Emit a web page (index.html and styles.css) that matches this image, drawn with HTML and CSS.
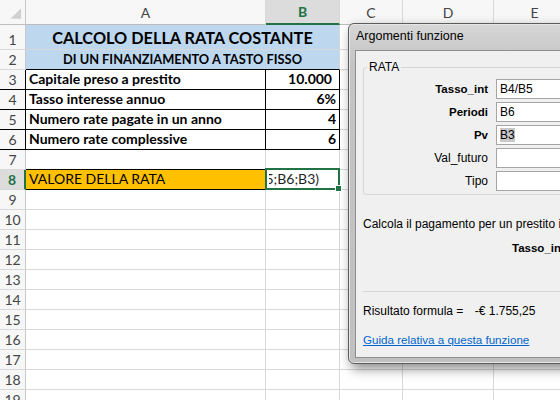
FILE: index.html
```html
<!DOCTYPE html>
<html lang="it">
<head>
  <meta charset="UTF-8" />
  <title>Calcolo della rata costante</title>
  <link rel="stylesheet" href="styles.css">
</head>
<body>

  <!-- Foglio -->
  <div class="sheet">
    <div class="row head">
      <div class="rh corner">
        <svg width="26" height="25" viewBox="0 0 26 25"><polygon points="22,9 22,20 11,20" fill="#d0d0d0"/></svg>
      </div>
      <div class="ch a">A</div>
      <div class="ch b active">B</div>
      <div class="ch c">C</div>
      <div class="ch d">D</div>
      <div class="ch e">E</div>
    </div>

    <div class="row tall">
      <div class="rh">1</div>
      <div class="cell ab band title">CALCOLO DELLA RATA COSTANTE</div>
      <div class="cell c"></div><div class="cell d"></div><div class="cell e"></div>
    </div>
    <div class="row">
      <div class="rh">2</div>
      <div class="cell ab band subtitle">DI UN FINANZIAMENTO A TASTO FISSO</div>
      <div class="cell c"></div><div class="cell d"></div><div class="cell e"></div>
    </div>
    <div class="row">
      <div class="rh boxed">3</div>
      <div class="cell a boxed label">Capitale preso a prestito</div>
      <div class="cell b boxed value pad">10.000</div>
      <div class="cell c"></div><div class="cell d"></div><div class="cell e"></div>
    </div>
    <div class="row">
      <div class="rh boxed">4</div>
      <div class="cell a boxed label">Tasso interesse annuo</div>
      <div class="cell b boxed value">6%</div>
      <div class="cell c"></div><div class="cell d"></div><div class="cell e"></div>
    </div>
    <div class="row">
      <div class="rh boxed">5</div>
      <div class="cell a boxed label">Numero rate pagate in un anno</div>
      <div class="cell b boxed value">4</div>
      <div class="cell c"></div><div class="cell d"></div><div class="cell e"></div>
    </div>
    <div class="row">
      <div class="rh boxed">6</div>
      <div class="cell a boxed label">Numero rate complessive</div>
      <div class="cell b boxed value">6</div>
      <div class="cell c"></div><div class="cell d"></div><div class="cell e"></div>
    </div>
    <div class="row">
      <div class="rh">7</div>
      <div class="cell a top-of-total"></div>
      <div class="cell b"></div>
      <div class="cell c"></div><div class="cell d"></div><div class="cell e"></div>
    </div>
    <div class="row">
      <div class="rh active">8</div>
      <div class="cell a total">VALORE DELLA RATA</div>
      <div class="cell b sel"><div class="edit"><span>=RATA(B4/B5;B6;B3)</span></div></div>
      <div class="cell c"></div><div class="cell d"></div><div class="cell e"></div>
    </div>
    <div class="row"><div class="rh">9</div><div class="cell a"></div><div class="cell b"></div><div class="cell c"></div><div class="cell d"></div><div class="cell e"></div></div>
    <div class="row"><div class="rh">10</div><div class="cell a"></div><div class="cell b"></div><div class="cell c"></div><div class="cell d"></div><div class="cell e"></div></div>
    <div class="row"><div class="rh">11</div><div class="cell a"></div><div class="cell b"></div><div class="cell c"></div><div class="cell d"></div><div class="cell e"></div></div>
    <div class="row"><div class="rh">12</div><div class="cell a"></div><div class="cell b"></div><div class="cell c"></div><div class="cell d"></div><div class="cell e"></div></div>
    <div class="row"><div class="rh">13</div><div class="cell a"></div><div class="cell b"></div><div class="cell c"></div><div class="cell d"></div><div class="cell e"></div></div>
    <div class="row"><div class="rh">14</div><div class="cell a"></div><div class="cell b"></div><div class="cell c"></div><div class="cell d"></div><div class="cell e"></div></div>
    <div class="row"><div class="rh">15</div><div class="cell a"></div><div class="cell b"></div><div class="cell c"></div><div class="cell d"></div><div class="cell e"></div></div>
    <div class="row"><div class="rh">16</div><div class="cell a"></div><div class="cell b"></div><div class="cell c"></div><div class="cell d"></div><div class="cell e"></div></div>
    <div class="row"><div class="rh">17</div><div class="cell a"></div><div class="cell b"></div><div class="cell c"></div><div class="cell d"></div><div class="cell e"></div></div>
    <div class="row"><div class="rh">18</div><div class="cell a"></div><div class="cell b"></div><div class="cell c"></div><div class="cell d"></div><div class="cell e"></div></div>
    <div class="row"><div class="rh">19</div><div class="cell a"></div><div class="cell b"></div><div class="cell c"></div><div class="cell d"></div><div class="cell e"></div></div>
  </div>

  <!-- Finestra Argomenti funzione -->
  <div class="dialog">
    <div class="dlg-title">Argomenti funzione</div>
    <div class="dlg-body">
      <fieldset class="group">
        <legend>RATA</legend>
        <div class="args">
          <label class="req">Tasso_int</label><div class="field">B4/B5</div>
          <label class="req">Periodi</label><div class="field">B6</div>
          <label class="req">Pv</label><div class="field"><span class="hl">B3</span></div>
          <label>Val_futuro</label><div class="field"></div>
          <label>Tipo</label><div class="field"></div>
        </div>
      </fieldset>

      <p class="desc">Calcola il pagamento per un prestito in base a pagamenti costanti e a un tasso di interesse costante.</p>
      <p class="arg-help"><b>Tasso_int</b>&nbsp;&nbsp;è il tasso di interesse per periodo del prestito.</p>

      <hr>

      <p class="result">Risultato formula = <span class="res-val">-€ 1.755,25</span></p>
      <a href="#" class="help">Guida relativa a questa funzione</a>
    </div>
  </div>

</body>
</html>
```

FILE: styles.css
```css
body {
  margin: 0;
  width: 560px;
  height: 400px;
  overflow: hidden;
  position: relative;
  background: #fff;
  font-family: Lato, "Liberation Sans", sans-serif;
  color: #000;
}

/* Foglio */
.sheet {
  width: 560px;
}

.row {
  display: flex;
  height: 20px;
}

.row.head,
.row.tall {
  height: 25px;
}

.rh {
  flex: none;
  width: 26px;
  box-sizing: border-box;
  border-right: 1px solid #c8c8c8;
  border-bottom: 1px solid #d8d8d8;
  background: #f7f7f7;
  color: #444;
  font-size: 14px;
  display: flex;
  align-items: flex-end;
  justify-content: center;
  line-height: 18px;
}

.rh.corner {
  padding: 0;
  border-bottom: 1px solid #bdbdbd;
}

.rh.boxed {
  border-right-color: #000;
}

.rh.active {
  background: #dcdcdc;
  color: #217346;
  font-weight: bold;
  border-right: 2px solid #217346;
}

.ch {
  flex: none;
  box-sizing: border-box;
  border-right: 1px solid #d8d8d8;
  border-bottom: 1px solid #bdbdbd;
  background: #f7f7f7;
  color: #444;
  font-size: 14px;
  display: flex;
  align-items: center;
  justify-content: center;
}

.ch.active {
  background: #dcdcdc;
  color: #217346;
  font-weight: bold;
  border-bottom: 2px solid #217346;
}

.a { width: 240px; }
.b { width: 74px; }
.ab { width: 314px; }
.c { width: 63px; }
.d { width: 91px; }
.e { width: 82px; }

.cell {
  flex: none;
  box-sizing: border-box;
  border-right: 1px solid #d8d8d8;
  border-bottom: 1px solid #d8d8d8;
  display: flex;
  align-items: flex-end;
  padding: 0 3px 1px;
  white-space: nowrap;
  font-size: 14px;
  line-height: 18px;
}

.band {
  background: #bdd7ee;
  justify-content: center;
  font-weight: bold;
}

.title {
  font-size: 16.3px;
  line-height: 22px;
  padding-bottom: 0;
}

.subtitle {
  font-size: 12.8px;
  border-bottom-color: #000;
}

.boxed {
  border-right-color: #000;
  border-bottom-color: #000;
}

.label {
  font-weight: bold;
}

.value {
  font-weight: bold;
  justify-content: flex-end;
}

.value.pad {
  padding-right: 7px;
}

.top-of-total {
  border-bottom-color: #000;
}

.total {
  background: #ffc000;
  border-bottom-color: #000;
}

/* cella selezionata in modifica */
.sel {
  position: relative;
  padding-right: 20px;
}

.sel .edit {
  width: 100%;
  overflow: hidden;
  display: flex;
  justify-content: flex-end;
}

.sel .edit span {
  flex: none;
  color: #1f1f1f;
}

.sel::after {
  content: "";
  position: absolute;
  top: -2px;
  left: -1px;
  right: -1px;
  bottom: -1px;
  border: 2px solid #217346;
}

.sel::before {
  content: "";
  position: absolute;
  right: -3px;
  bottom: -3px;
  width: 5px;
  height: 5px;
  background: #217346;
  border: 1px solid #fff;
  z-index: 2;
}

/* Finestra di dialogo */
.dialog {
  position: absolute;
  left: 348px;
  top: 23px;
  width: 480px;
  height: 341px;
  box-sizing: border-box;
  border: 1px solid #5c5c5c;
  border-radius: 6px;
  background: linear-gradient(#d6d6d6, #c4c4c4 40px, #c0c0c0);
  box-shadow: inset 0 0 0 1px #e6e6e6, 3px 5px 12px rgba(0, 0, 0, 0.45);
  font-family: "Liberation Sans", Arial, sans-serif;
  font-size: 12px;
  color: #000;
  display: flex;
  flex-direction: column;
}

.dlg-title {
  height: 26px;
  line-height: 24px;
  padding-left: 7px;
  font-size: 12.5px;
}

.dlg-body {
  flex: 1;
  margin: 0 6px 5px 6px;
  border: 1px solid #8e8e8e;
  background: #f0f0f0;
  padding: 0 7px;
}

.group {
  margin: 9px 0 0 0;
  padding: 0 0 3px 0;
  border: 1px solid #d5d5d5;
  border-radius: 3px;
  min-width: 0;
}

.group legend {
  margin-left: 3px;
  padding: 0 2px;
  line-height: 14px;
}

.args {
  margin-top: 5px;
  display: grid;
  grid-template-columns: 124px 1fr;
  grid-auto-rows: 20px;
  column-gap: 8px;
  row-gap: 3px;
}

.args label {
  text-align: right;
  line-height: 20px;
}

.args label.req {
  font-weight: bold;
  font-size: 11.5px;
}

.field {
  box-sizing: border-box;
  border: 1px solid #a5a5a5;
  background: #fff;
  padding: 0 3px;
  line-height: 18px;
}

.hl {
  background: #c8c8c8;
}

.desc,
.arg-help,
.result {
  margin: 0;
  line-height: 14px;
  white-space: nowrap;
}

.desc {
  margin-top: 22px;
}

.arg-help {
  margin-top: 10px;
  padding-left: 149px;
}

.arg-help b {
  font-size: 11.5px;
}

hr {
  margin: 36px 0 0 0;
  border: none;
  border-top: 1px solid #d6d6d6;
  height: 0;
}

.result {
  margin-top: 12px;
}

.res-val {
  margin-left: 8px;
}

.help {
  display: inline-block;
  margin-top: 15px;
  line-height: 14px;
  font-size: 11.6px;
  color: #0066cc;
  text-decoration: underline;
}
```
